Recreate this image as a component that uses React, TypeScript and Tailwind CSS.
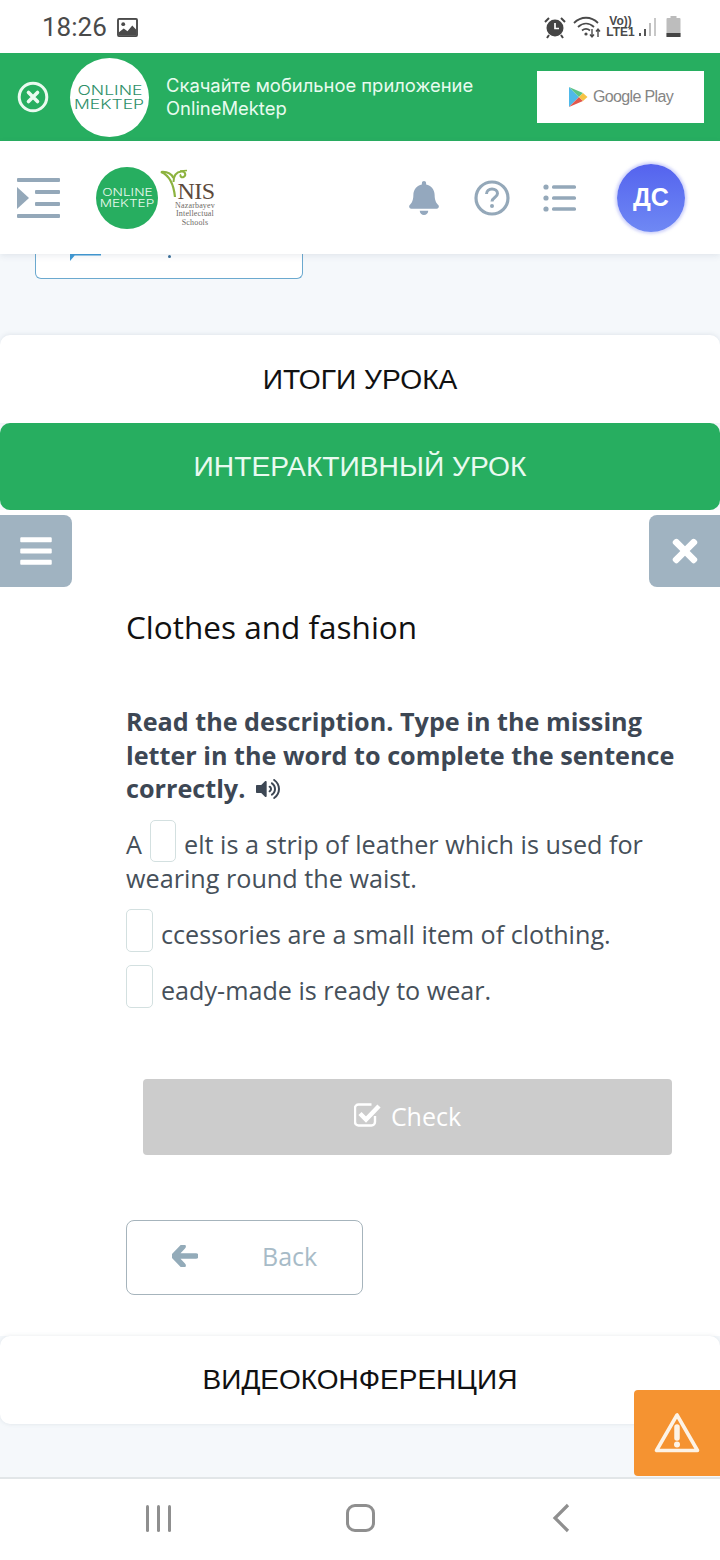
import React from "react";
import { FaBars, FaTimes, FaVolumeUp, FaBell } from "react-icons/fa";

const OPEN = "font-['Open_Sans',sans-serif]";
const LIB = "font-['Liberation_Sans',Arial,sans-serif]";

function Blank({ cls }: { cls: string }) {
  return <span className={`inline-block border border-[#d3e0e0] rounded-[5px] bg-white ${cls}`} />;
}

function MektepLogo({ size, bg, fg, fs, lh }: { size: string; bg: string; fg: string; fs: string; lh: string }) {
  return (
    <div className={`${size} ${bg} ${fg} ${fs} ${lh} rounded-full flex flex-col items-center justify-center shrink-0 font-['Inter',sans-serif] font-light`}>
      <span className="scale-x-[1.3]">ONLINE</span>
      <span className="scale-x-[1.3]">MEKTEP</span>
    </div>
  );
}

function StatusIcons() {
  return (
    <div className="flex items-center gap-[3px] text-[#4a4a4a] mt-[2px]">
      <svg width="24" height="24" viewBox="0 0 24 24" className="mr-[3px]">
        <circle cx="12" cy="13" r="8.5" fill="#454545" />
        <path d="M12 8v5.5h4" stroke="#fff" strokeWidth="1.7" fill="none" />
        <path d="M2 7l4-4M22 7l-4-4M6 20l-2 3M18 20l2 3" stroke="#454545" strokeWidth="2" />
      </svg>
      <svg width="28" height="24" viewBox="0 0 28 24" className="mr-[3px]">
        <path d="M1 8c7-7 17-7 24 0M5 12c5-4.500 11-4.500 16 0M9 15.500c2.500-2 5.500-2 8 0" stroke="#4a4a4a" strokeWidth="1.8" fill="none" />
        <circle cx="13" cy="19" r="1.600" fill="#4a4a4a" />
        <path d="M19 14v8M17 19.500l2 2.500 2-2.500M25 22v-8M23 16.500l2-2.500 2 2.500" stroke="#4a4a4a" strokeWidth="1.400" fill="none" />
      </svg>
      <div className={`flex flex-col items-center text-[12px] leading-[11px] font-bold ${LIB} w-[27px]`}>
        <span>Vo))</span>
        <span>LTE1</span>
      </div>
      <svg width="19" height="22" viewBox="0 0 19 22" className="ml-[1px] mr-[6px]">
        <rect x="1" y="17" width="2" height="3" fill="#555" />
        <rect x="6" y="13" width="2" height="7" fill="#555" />
        <rect x="11" y="7" width="2" height="13" fill="#bdbdbd" />
        <rect x="16" y="2" width="2" height="18" fill="#c8c8c8" />
      </svg>
      <svg width="15" height="22" viewBox="0 0 15 22">
        <rect x="4.500" y="0" width="6" height="2" fill="#bbb" />
        <rect x="0.500" y="2" width="14" height="19" rx="1" fill="#bdbdbd" />
        <rect x="0.500" y="17" width="14" height="4" fill="#444" />
      </svg>
    </div>
  );
}

function NisLogo() {
  return (
    <div className="w-[55px] h-[60px] ml-[2px] flex flex-col items-center relative font-['Liberation_Serif',serif]">
      <svg width="30" height="32" viewBox="0 0 30 32" className="absolute left-0 top-0">
        <path d="M15 29C14 19 11 8 1 4c6-.500 10 1 12.500 6" fill="none" stroke="#8db33f" strokeWidth="2.200" />
        <path d="M13.500 14c0-6 3-10 8-10.500 4-.200 5 4 2 5.500-2 1-4-1-2.500-2.500" fill="none" stroke="#8db33f" strokeWidth="2" />
        <path d="M20 3l7-.500" stroke="#8db33f" strokeWidth="1.500" />
      </svg>
      <span className="text-[#5d4a3c] text-[24px] leading-[24px] mt-[11px] ml-[17px] tracking-[-0.02em]">NIS</span>
      <div className="text-[#6e6a66] text-[8px] leading-[8.500px] flex flex-col items-center ml-[15px] mt-[-1px] tracking-[0.02em]">
        <span>Nazarbayev</span>
        <span>Intellectual</span>
        <span>Schools</span>
      </div>
    </div>
  );
}

export default function App() {
  return (
    <div className={`relative w-[720px] h-[1560px] overflow-hidden bg-white flex flex-col ${OPEN}`}>
      {/* status bar */}
      <div className="h-[53px] shrink-0 flex items-center justify-between pl-[42px] pr-[39px] pb-[1px]">
        <div className="flex items-center gap-[10px] mt-[2px]">
          <span className="font-['Roboto',sans-serif] text-[26px] leading-none text-[#4a4a4a]">18:26</span>
          <svg width="21" height="19" viewBox="0 0 22 20">
            <rect width="22" height="20" rx="2" fill="#4a4a4a" />
            <rect x="2" y="2" width="18" height="16" fill="#fff" />
            <circle cx="6.500" cy="6.500" r="2" fill="#4a4a4a" />
            <path d="M2 18v-3l5-4 4 3 5-6 4 4v6z" fill="#4a4a4a" />
          </svg>
        </div>
        <StatusIcons />
      </div>

      {/* app banner */}
      <div className="h-[88px] shrink-0 bg-[#27ae60] flex items-center pl-[17px] pr-[16px]">
        <svg width="32" height="32" viewBox="0 0 32 32" className="shrink-0">
          <circle cx="16" cy="16" r="13.800" fill="none" stroke="#eafaf0" strokeWidth="3" />
          <path d="M11.500 11.500l9 9M20.500 11.500l-9 9" stroke="#eafaf0" strokeWidth="3.600" strokeLinecap="round" />
        </svg>
        <MektepLogo size="w-[79px] h-[79px] ml-[21px]" bg="bg-white" fg="text-[#2e8f68]" fs="text-[13.500px]" lh="leading-[14px]" />
        <div className="ml-[17px] flex-1 text-[#e8fbef] text-[18.400px] leading-[23px] font-['Inter',sans-serif]">
          <div>Скачайте мобильное приложение</div>
          <div>OnlineMektep</div>
        </div>
        <div className="w-[167px] h-[52px] bg-white flex items-center justify-center gap-[5px]">
          <svg width="20" height="22" viewBox="0 0 20 22">
            <path d="M1 1v20l10-10z" fill="#4fb9ea" />
            <path d="M1 1l10 10 4-4z" fill="#5cc486" />
            <path d="M1 21l10-10 4 4z" fill="#e2574c" />
            <path d="M15 7l4.500 4-4.500 4-4-4z" fill="#f6c344" />
          </svg>
          <span className={`text-[16px] leading-none text-[#858585] tracking-[-0.04em] ${LIB}`}>Google Play</span>
        </div>
      </div>

      {/* header */}
      <div className="relative z-10 h-[113px] shrink-0 bg-white shadow-[0_2px_6px_rgba(90,110,130,0.12)] flex items-center pl-[17px]">
        <svg width="44" height="42" viewBox="0 0 44 42" className="shrink-0">
          <rect x="0" y="1" width="43" height="4" rx="1" fill="#94a8b9" />
          <rect x="18" y="13" width="25" height="4" rx="1" fill="#94a8b9" />
          <rect x="18" y="25" width="25" height="4" rx="1" fill="#94a8b9" />
          <rect x="0" y="37" width="43" height="4" rx="1" fill="#94a8b9" />
          <path d="M0 10l12 11L0 32z" fill="#94a8b9" />
        </svg>
        <MektepLogo size="w-[62px] h-[62px] ml-[35px]" bg="bg-[#27ae60]" fg="text-[#e6f8ec]" fs="text-[10.500px]" lh="leading-[11px]" />
        <NisLogo />
        <div className="ml-[194px] w-[30px] flex justify-center">
          <FaBell className="text-[#94a8be] w-[30px] h-[34px]" />
        </div>
        <svg width="36" height="36" viewBox="0 0 36 36" className="ml-[35px]">
          <circle cx="18" cy="18" r="16" fill="none" stroke="#94a8b9" strokeWidth="3.200" />
          <path d="M12.500 14c0-3.200 2.500-5 5.500-5s5.500 1.800 5.500 4.500c0 4-5.500 4-5.500 8" fill="none" stroke="#94a8b9" strokeWidth="3" />
          <circle cx="18" cy="26" r="2" fill="#94a8b9" />
        </svg>
        <svg width="34" height="30" viewBox="0 0 34 30" className="ml-[33px]">
          <circle cx="3" cy="4" r="2.600" fill="#94a8b9" />
          <circle cx="3" cy="15" r="2.600" fill="#94a8b9" />
          <circle cx="3" cy="26" r="2.600" fill="#94a8b9" />
          <rect x="9" y="2.300" width="24" height="3.400" rx="1.500" fill="#94a8b9" />
          <rect x="9" y="13.300" width="24" height="3.400" rx="1.500" fill="#94a8b9" />
          <rect x="9" y="24.300" width="24" height="3.400" rx="1.500" fill="#94a8b9" />
        </svg>
        <div className={`ml-[40px] w-[68px] h-[68px] rounded-full bg-gradient-to-b from-[#5563ee] to-[#6f88f4] shadow-[0_0_3px_2px_rgba(120,130,240,0.35)] flex items-center justify-center text-white text-[25px] font-bold ${LIB}`}>
          ДС
        </div>
      </div>

      {/* page body */}
      <div className="flex-1 bg-[#f5f8fb] flex flex-col min-h-0">
        <div className="ml-[35px] w-[268px] h-[25px] shrink-0 bg-white border border-t-0 border-[#6ba9cf] rounded-b-[6px] relative">
          <svg width="34" height="10" viewBox="0 0 34 10" className="absolute left-[31px] top-0">
            <path d="M0 0h3v7l6-7z" fill="#3f9ad6" />
            <rect x="8" y="0" width="26" height="1.500" fill="#3f9ad6" />
          </svg>
          <span className="absolute left-[132px] top-[1px] w-[3px] h-[3px] bg-[#3a6f99] rounded-full" />
        </div>

        <div className={`mt-[56px] h-[88px] shrink-0 bg-white rounded-t-[10px] shadow-[0_-1px_4px_rgba(90,110,130,0.12)] flex items-center justify-center text-[#111] text-[28.200px] ${LIB}`}>
          ИТОГИ УРОКА
        </div>
        <div className={`h-[87px] shrink-0 bg-[#27ae60] rounded-[10px] flex items-center justify-center text-[#e9faf0] text-[28.200px] ${LIB}`}>
          ИНТЕРАКТИВНЫЙ УРОК
        </div>

        {/* lesson panel */}
        <div className="h-[826px] shrink-0 bg-white flex flex-col pt-[5px]">
          <div className="flex justify-between">
            <div className="w-[72px] h-[72px] bg-[#a0b3c1] rounded-r-[8px] flex items-center justify-center">
              <FaBars className="text-white w-[36px] h-[36px]" />
            </div>
            <div className="w-[71px] h-[72px] bg-[#a0b3c1] rounded-l-[8px] flex items-center justify-center">
              <FaTimes className="text-white w-[30px] h-[36px]" />
            </div>
          </div>
          <div className="pl-[126px] pr-[30px]">
            <h1 className="mt-[18px] text-[31.500px] leading-[44px] text-[#111] font-normal">Clothes and fashion</h1>
            <p className="mt-[56px] text-[25.200px] leading-[33.500px] font-bold text-[#3d4754]">
              Read the description. Type in the missing letter in the word to complete the sentence correctly.
              <FaVolumeUp className="inline-block ml-[11px] w-[24px] h-[24px] align-[-3px]" />
            </p>
            <p className="mt-[21px] text-[25.200px] leading-[34px] text-[#46505a]">
              A <Blank cls="w-[26px] h-[42px] ml-[2px] mr-[1px] -mt-[7px] -mb-[1px] align-top" /> elt is a strip of leather which is used for wearing round the waist.
            </p>
            <div className="mt-[8px] h-[56px] flex items-center gap-[8px] text-[25.150px] leading-[34px] text-[#46505a]">
              <Blank cls="w-[27px] h-[43px] shrink-0" /> <span className="mt-[6px]">ccessories are a small item of clothing.</span>
            </div>
            <div className="h-[56px] flex items-center gap-[8px] text-[25.150px] leading-[34px] text-[#46505a]">
              <Blank cls="w-[27px] h-[43px] shrink-0" /> <span className="mt-[6px]">eady-made is ready to wear.</span>
            </div>
            <button className="mt-[64px] ml-[17px] w-[529px] h-[76px] bg-[#cccccc] rounded-[4px] flex items-center justify-center gap-[9px] text-white text-[25px]">
              <svg width="28" height="26" viewBox="0 0 28 26" className="mb-[3px]">
                <path d="M21 14v6a3.500 3.500 0 0 1-3.500 3.500h-13A3.500 3.500 0 0 1 1 20V6a3.500 3.500 0 0 1 3.500-3.500h13" fill="none" stroke="#fff" strokeWidth="2.400" />
                <path d="M6 11.500l6 6L25 4" fill="none" stroke="#fff" strokeWidth="4.500" />
              </svg>
              Check
            </button>
            <button className="mt-[65px] w-[237px] h-[75px] bg-white border border-[#a6b4bc] rounded-[8px] flex items-center pl-[45px] text-[#a7bbc7] text-[25px]">
              <svg width="26" height="22" viewBox="0 0 26 22" className="mb-[3px]">
                <path d="M11 1.500L2 11l9 9.500M3 11h21" fill="none" stroke="#93abb9" strokeWidth="5.500" strokeLinecap="round" strokeLinejoin="round" />
              </svg>
              <span className="ml-[64px]">Back</span>
            </button>
          </div>
        </div>

        <div className={`h-[88px] shrink-0 bg-white rounded-[10px] shadow-[0_0_4px_rgba(90,110,130,0.15)] flex items-center justify-center text-[#111] text-[28px] ${LIB}`}>
          ВИДЕОКОНФЕРЕНЦИЯ
        </div>
      </div>

      {/* android nav */}
      <div className="h-[83px] shrink-0 bg-white border-t-2 border-[#e2e6e8] flex items-center relative">
        <div className="absolute left-[146px] top-[26px] flex gap-[8px]">
          <span className="w-[3px] h-[27px] rounded bg-[#8f8f8f]" />
          <span className="w-[3px] h-[27px] rounded bg-[#8f8f8f]" />
          <span className="w-[3px] h-[27px] rounded bg-[#8f8f8f]" />
        </div>
        <span className="absolute left-[346px] top-[25px] w-[29px] h-[28px] rounded-[9px] border-[3px] border-[#8f8f8f]" />
        <svg width="20" height="30" viewBox="0 0 20 30" className="absolute left-[552px] top-[24px]">
          <path d="M16 2L3 15l13 13" fill="none" stroke="#8f8f8f" strokeWidth="3.200" />
        </svg>
      </div>

      {/* report button overlay */}
      <div className="absolute left-[634px] top-[1390px] w-[86px] h-[86px] bg-[#f59331] rounded-l-[4px] flex items-center justify-center">
        <svg width="46" height="42" viewBox="0 0 46 42">
          <path d="M23 3L2.500 38.500h41z" fill="none" stroke="#fdf3e6" strokeWidth="3.600" strokeLinejoin="round" />
          <path d="M23 15v11" stroke="#fdf3e6" strokeWidth="5.500" strokeLinecap="round" />
          <circle cx="23" cy="32.500" r="3" fill="#fdf3e6" />
        </svg>
      </div>
    </div>
  );
}
